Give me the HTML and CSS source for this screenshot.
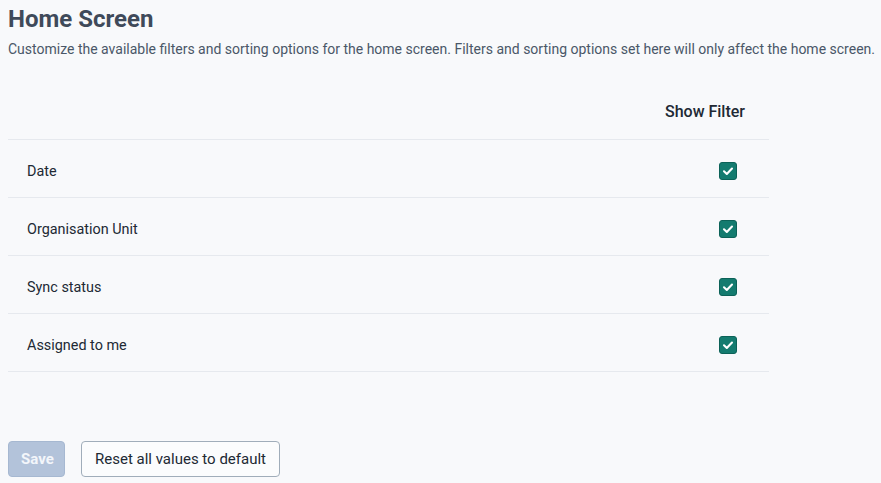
FILE: index.html
```html
<!DOCTYPE html>
<html>
<head>
<meta charset="utf-8">
<link rel="stylesheet" href="styles.css">
</head>
<body>
<main class="page">
  <h1 class="title">Home Screen</h1>
  <p class="subtitle">Customize the available filters and sorting options for the home screen. Filters and sorting options set here will only affect the home screen.</p>
  <table class="filters">
    <thead>
      <tr><th class="name-col"></th><th class="show-col">Show Filter</th></tr>
    </thead>
    <tbody>
      <tr><td class="name">Date</td><td class="check-cell"><span class="check"><svg viewBox="0 0 12 12" width="12" height="12"><path d="M2 6.3 L4.8 8.9 L10 3.5" fill="none" stroke="#fff" stroke-width="2.1" stroke-linecap="round" stroke-linejoin="round"/></svg></span></td></tr>
      <tr><td class="name">Organisation Unit</td><td class="check-cell"><span class="check"><svg viewBox="0 0 12 12" width="12" height="12"><path d="M2 6.3 L4.8 8.9 L10 3.5" fill="none" stroke="#fff" stroke-width="2.1" stroke-linecap="round" stroke-linejoin="round"/></svg></span></td></tr>
      <tr><td class="name">Sync status</td><td class="check-cell"><span class="check"><svg viewBox="0 0 12 12" width="12" height="12"><path d="M2 6.3 L4.8 8.9 L10 3.5" fill="none" stroke="#fff" stroke-width="2.1" stroke-linecap="round" stroke-linejoin="round"/></svg></span></td></tr>
      <tr><td class="name">Assigned to me</td><td class="check-cell"><span class="check"><svg viewBox="0 0 12 12" width="12" height="12"><path d="M2 6.3 L4.8 8.9 L10 3.5" fill="none" stroke="#fff" stroke-width="2.1" stroke-linecap="round" stroke-linejoin="round"/></svg></span></td></tr>
    </tbody>
  </table>
  <div class="actions">
    <button class="btn btn-primary" disabled>Save</button>
    <button class="btn btn-secondary">Reset all values to default</button>
  </div>
</main>
</body>
</html>
```
FILE: styles.css
```css
html, body {
  margin: 0;
  padding: 0;
  background: #f8f9fb;
}
body {
  font-family: Roboto, "Liberation Sans", sans-serif;
  color: #212934;
}
.page {
  padding: 4px 8px 0 8px;
}
.title {
  margin: 0;
  font-size: 24px;
  line-height: 30px;
  font-weight: 700;
  color: #3f4a5a;
}
.subtitle {
  margin: 6px 0 0 0;
  font-size: 14px;
  line-height: 18px;
  color: #4a5768;
  white-space: nowrap;
}
.filters {
  margin-top: 27px;
  width: 761px;
  border-collapse: collapse;
}
.filters th {
  height: 52px;
  padding: 0 0 2px 0;
  font-size: 16px;
  font-weight: 500;
  color: #212934;
  text-align: right;
  vertical-align: middle;
  border-bottom: 1px solid #e6e9ee;
}
.filters th.show-col {
  padding-right: 24px;
  width: 120px;
}
.filters td {
  height: 51px;
  padding: 6px 0 0 0;
  border-bottom: 1px solid #e6e9ee;
  vertical-align: middle;
}
.filters td.name {
  padding-left: 19px;
  font-size: 14.4px;
  color: #212934;
}
.filters td.check-cell {
  text-align: right;
  padding-right: 32px;
  padding-top: 4px;
  height: 53px;
}
.check {
  display: inline-flex;
  align-items: center;
  justify-content: center;
  width: 16px;
  height: 16px;
  border: 1px solid #0c6258;
  border-radius: 3px;
  background: #147b6f;
  vertical-align: middle;
}
.actions {
  display: flex;
  gap: 16px;
  margin-top: 69px;
}
.btn {
  font-family: Roboto, "Liberation Sans", sans-serif;
  font-size: 15px;
  height: 36px;
  border-radius: 4px;
  padding: 0 12px;
}
.btn-primary {
  width: 57px;
  background: #b3c3da;
  border: 1px solid #a6b8d1;
  color: #f3f6fa;
  font-weight: 700;
}
.btn-secondary {
  width: 199px;
  background: #fbfcfd;
  border: 1px solid #a0adba;
  color: #212934;
}
```
